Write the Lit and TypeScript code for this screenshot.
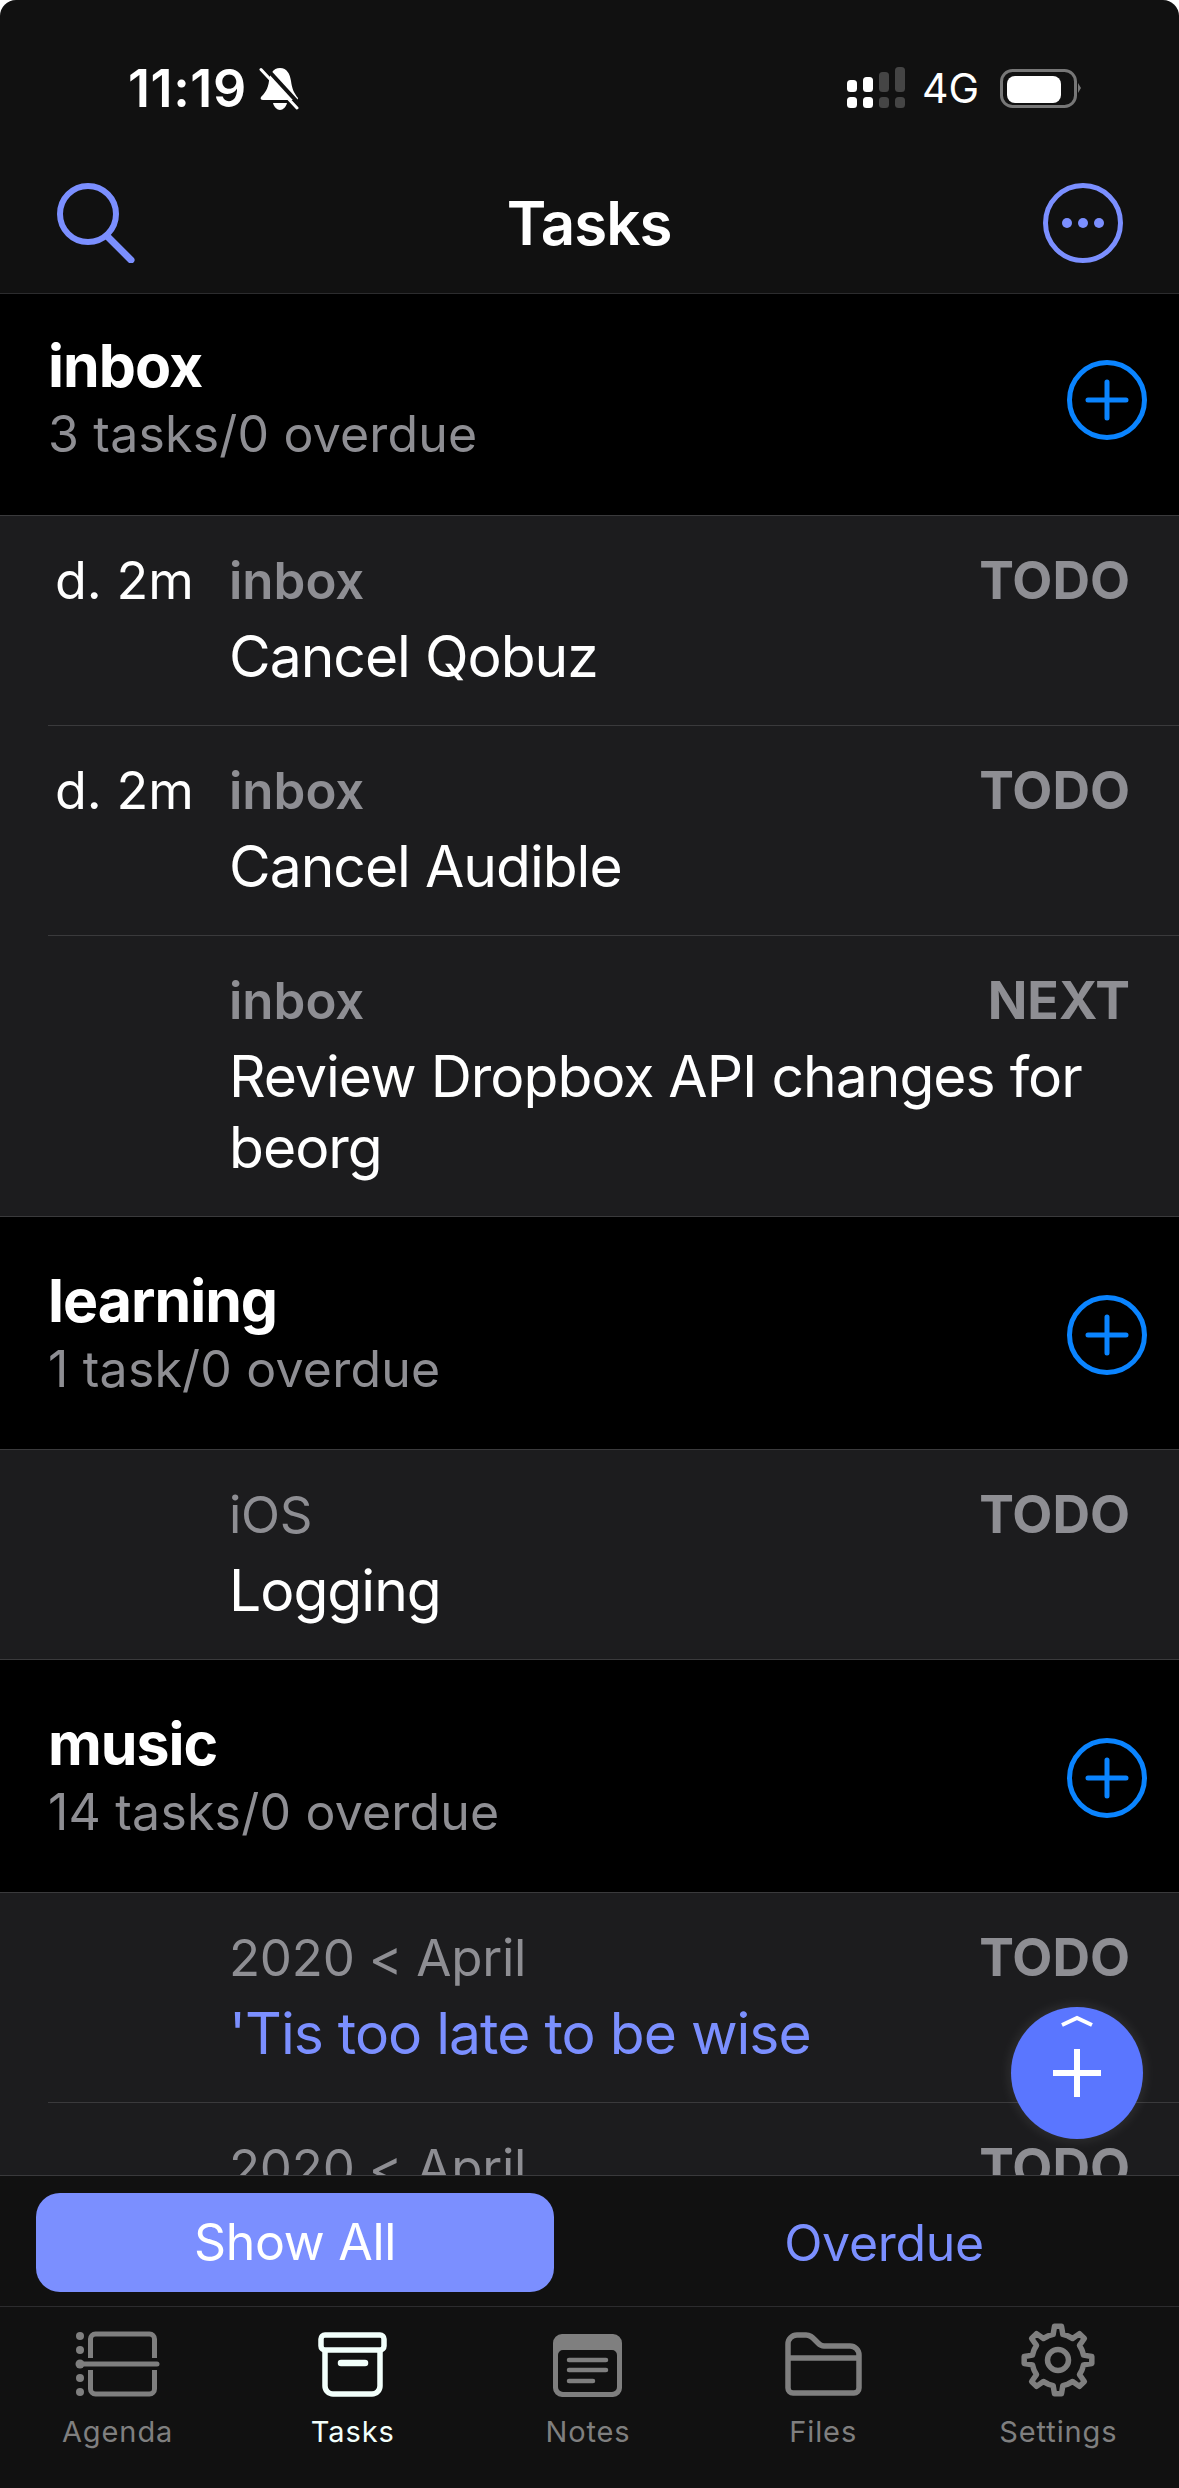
import { LitElement, html, css, svg } from 'lit';
import { customElement } from 'lit/decorators.js';

interface Task {
  due?: string;
  category: string;
  boldCategory?: boolean;
  state: string;
  title?: string;
  link?: boolean;
}

interface Section {
  name: string;
  summary: string;
  tasks: Task[];
}

const SECTIONS: Section[] = [
  {
    name: 'inbox',
    summary: '3 tasks/0 overdue',
    tasks: [
      { due: 'd. 2m', category: 'inbox', boldCategory: true, state: 'TODO', title: 'Cancel Qobuz' },
      { due: 'd. 2m', category: 'inbox', boldCategory: true, state: 'TODO', title: 'Cancel Audible' },
      { category: 'inbox', boldCategory: true, state: 'NEXT', title: 'Review Dropbox API changes for beorg' },
    ],
  },
  {
    name: 'learning',
    summary: '1 task/0 overdue',
    tasks: [{ category: 'iOS', state: 'TODO', title: 'Logging' }],
  },
  {
    name: 'music',
    summary: '14 tasks/0 overdue',
    tasks: [
      { category: '2020 < April', state: 'TODO', title: "'Tis too late to be wise", link: true },
      // scrolled under the filter bar, only the top of this row shows
      { category: '2020 < April', state: 'TODO' },
    ],
  },
];

// 8 toothed gear outline, stroked with round joins
function gearPath(cx: number, cy: number, outer: number, inner: number): string {
  const pts: string[] = [];
  const teeth = 8;
  for (let i = 0; i < teeth; i++) {
    const a = (i * Math.PI * 2) / teeth - Math.PI / 2;
    const step = (Math.PI * 2) / teeth;
    const offsets: [number, number][] = [
      [-0.5, inner],
      [-0.24, inner],
      [-0.13, outer],
      [0.13, outer],
      [0.24, inner],
    ];
    for (const [o, r] of offsets) {
      const t = a + o * step;
      pts.push(`${(cx + r * Math.cos(t)).toFixed(2)} ${(cy + r * Math.sin(t)).toFixed(2)}`);
    }
  }
  return `M${pts.join('L')}Z`;
}

const agendaIcon = svg`
  <g fill="currentColor">
    <circle cx="5" cy="6" r="4"/><circle cx="5" cy="20" r="4"/><circle cx="5" cy="34" r="4.5"/>
    <circle cx="5" cy="48" r="4"/><circle cx="5" cy="62" r="4"/>
  </g>
  <path d="M15.5 28V9a5 5 0 0 1 5-5h54a5 5 0 0 1 5 5v19M15.5 40v19a5 5 0 0 0 5 5h54a5 5 0 0 0 5-5V40" fill="none" stroke="currentColor" stroke-width="5"/>
  <path d="M5 34h77" stroke="currentColor" stroke-width="5" stroke-linecap="round"/>`;

const tasksIcon = svg`
  <g fill="none" stroke="currentColor" stroke-width="5.5">
    <rect x="3" y="3" width="63" height="15" rx="4"/>
    <path d="M7 18v36a8 8 0 0 0 8 8h39a8 8 0 0 0 8-8V18"/>
  </g>
  <path d="M23 31h24" stroke="currentColor" stroke-width="6.5" stroke-linecap="round"/>`;

const notesIcon = svg`
  <path fill-rule="evenodd" fill="currentColor" d="M9 0h51a9 9 0 0 1 9 9v45a9 9 0 0 1-9 9H9a9 9 0 0 1-9-9V9a9 9 0 0 1 9-9ZM10 16a5 5 0 0 0-5 5v32a5 5 0 0 0 5 5h49a5 5 0 0 0 5-5V21a5 5 0 0 0-5-5Z"/>
  <path d="M16 26h37M16 36h37M16 47h24" stroke="currentColor" stroke-width="4.5" stroke-linecap="round"/>`;

const filesIcon = svg`
  <path fill="none" stroke="currentColor" stroke-width="5.5" d="M3 22V12a9 9 0 0 1 9-9h9c4 0 6 2 9 5l3 3c2 2 3 3 6 3h26a9 9 0 0 1 9 9v33a5 5 0 0 1-5 5H8a5 5 0 0 1-5-5ZM3 26h71"/>`;

const gearIcon = svg`
  <path fill="none" stroke="currentColor" stroke-width="5.5" stroke-linejoin="round" d="${gearPath(37, 37, 34, 26)}"/>
  <circle cx="37" cy="37" r="10.5" fill="none" stroke="currentColor" stroke-width="5.5"/>`;

const TABS = [
  { label: 'Agenda', w: 85, h: 67, icon: agendaIcon },
  { label: 'Tasks', w: 69, h: 65, icon: tasksIcon, active: true },
  { label: 'Notes', w: 69, h: 63, icon: notesIcon },
  { label: 'Files', w: 77, h: 65, icon: filesIcon },
  { label: 'Settings', w: 74, h: 74, icon: gearIcon },
];

@customElement('app-root')
export class AppRoot extends LitElement {
  static styles = css`
    :host {
      display: block;
      background: #fff;
    }

    .phone {
      width: 1179px;
      height: 2488px;
      display: flex;
      flex-direction: column;
      position: relative;
      overflow: hidden;
      background: #111111;
      border-radius: 16px 16px 0 0;
      font-family: Inter, 'Liberation Sans', sans-serif;
      color: #fff;
    }

    .topbar {
      height: 293px;
      flex: none;
      display: flex;
      flex-direction: column;
    }

    .status {
      height: 156px;
      padding: 67px 98px 0 128px;
      box-sizing: border-box;
      display: flex;
      justify-content: space-between;
      align-items: flex-start;
    }

    .status-left,
    .status-right {
      display: flex;
      align-items: center;
    }

    .time {
      font-size: 52px;
      font-weight: 600;
      line-height: 43px;
      letter-spacing: 0.6px;
      margin-right: 12px;
    }

    .network {
      font-size: 41px;
      line-height: 42px;
      margin: 0 21px 0 17px;
    }

    .nav {
      flex: 1;
      display: flex;
      justify-content: space-between;
      align-items: center;
      padding: 0 56px 3px 57px;
    }

    .nav-title {
      font-size: 60px;
      font-weight: 600;
      letter-spacing: -1px;
    }

    main {
      flex: 1;
      min-height: 0;
      overflow: hidden;
      background: #1c1c1e;
      border-top: 1px solid #2c2c2e;
    }

    .section-head {
      height: 234px;
      box-sizing: border-box;
      background: #000;
      padding: 4px 32px 0 48px;
      display: flex;
      justify-content: space-between;
      align-items: center;
      border-bottom: 1px solid #3a3a3c;
      border-top: 1px solid #3a3a3c;
    }

    .section-head.first {
      height: 222px;
      padding: 0 32px 10px 48px;
      border-top: 0;
    }

    .section-name {
      font-size: 59px;
      line-height: 66px;
      font-weight: 700;
      letter-spacing: -1px;
    }

    .section-summary {
      font-size: 50px;
      line-height: 66px;
      letter-spacing: 0.2px;
      color: #8e8e93;
      margin-top: 2px;
    }

    .row {
      margin-left: 48px;
      padding: 34px 49px 33px 0;
      display: grid;
      grid-template-columns: 181px 1fr auto;
      border-top: 1px solid #3a3a3c;
      row-gap: 9px;
    }

    .row:first-child {
      border-top: 0;
    }

    .due {
      font-size: 52px;
      line-height: 62px;
      padding-left: 7px;
    }

    .category {
      font-size: 51px;
      line-height: 62px;
      letter-spacing: -0.25px;
      color: #8e8e93;
    }

    .category.bold {
      font-weight: 600;
      letter-spacing: 0;
    }

    .state {
      font-size: 52px;
      line-height: 62px;
      font-weight: 700;
      color: #8e8e93;
    }

    .title {
      grid-column: 2 / 4;
      font-size: 57px;
      line-height: 71px;
      letter-spacing: -1px;
    }

    .title.link {
      color: #7b8fff;
    }

    .fab {
      position: absolute;
      left: 1011px;
      top: 2007px;
      width: 132px;
      height: 132px;
      border-radius: 50%;
      background: #5a76ff;
      box-shadow: 0 0 14px rgba(255, 255, 255, 0.12);
    }

    .filters {
      flex: none;
      height: 131px;
      box-sizing: border-box;
      border-top: 1px solid #3a3a3c;
      padding: 17px 36px 14px;
      display: grid;
      grid-template-columns: 518px 1fr;
      align-items: center;
      text-align: center;
      font-size: 50px;
      letter-spacing: -0.3px;
      color: #7b8fff;
    }

    .filter-on {
      height: 99px;
      line-height: 99px;
      border-radius: 24px;
      background: #7b8fff;
      color: #fff;
    }

    .filter-off {
      padding-left: 71px;
    }

    .tabs {
      flex: none;
      height: 182px;
      box-sizing: border-box;
      border-top: 1px solid #2c2c2e;
      display: grid;
      grid-template-columns: repeat(5, 1fr);
      padding-right: 3px;
    }

    .tab {
      display: flex;
      flex-direction: column;
      align-items: center;
      color: #7f7f7f;
    }

    .tab.active {
      color: #f2fffb;
    }

    .tab-icon {
      height: 90px;
      display: flex;
      align-items: flex-end;
    }

    .tab-label {
      font-size: 29px;
      line-height: 34px;
      letter-spacing: 0.9px;
      margin-top: 18px;
    }

    svg {
      display: block;
    }
  `;

  private renderSection(section: Section, index: number) {
    return html`
      <div class="section-head ${index === 0 ? 'first' : ''}">
        <div>
          <div class="section-name">${section.name}</div>
          <div class="section-summary">${section.summary}</div>
        </div>
        <svg width="80" height="80" viewBox="0 0 80 80" fill="none" stroke="#0a84ff" stroke-width="5">
          <circle cx="40" cy="40" r="37.5"/>
          <path d="M40 22v36M21 40h38" stroke-linecap="round"/>
        </svg>
      </div>
      <div>
        ${section.tasks.map(
          (t) => html`
            <div class="row">
              <div class="due">${t.due ?? ''}</div>
              <div class="category ${t.boldCategory ? 'bold' : ''}">${t.category}</div>
              <div class="state">${t.state}</div>
              ${t.title ? html`<div class="title ${t.link ? 'link' : ''}">${t.title}</div>` : ''}
            </div>
          `
        )}
      </div>
    `;
  }

  render() {
    return html`
      <div class="phone">
        <div class="topbar">
          <div class="status">
            <div class="status-left">
              <span class="time">11:19</span>
              <svg width="40" height="43" viewBox="0 0 40 43" fill="#fff">
                <path d="M21 1C28 1 31 7 32 14C33 22 35 26 39 31C39 33 38 33 37 33H4C2 33 1 32 2 30C6 26 9 22 10 14C11 7 14 1 21 1Z"/>
                <path d="M14 36H28C27 40 24 43 21 43C18 43 15 40 14 36Z"/>
                <path d="M7 1L41 38" stroke="#111" stroke-width="4"/>
                <path d="M2 2.5L38 41" stroke="#fff" stroke-width="3" stroke-linecap="round"/>
              </svg>
            </div>
            <div class="status-right">
              <svg width="58" height="42" viewBox="0 0 58 42">
                <g fill="#fff">
                  <rect x="0" y="13" width="10" height="12" rx="3.5"/>
                  <rect x="16" y="10" width="10" height="15" rx="3.5"/>
                  <rect x="0" y="30" width="10" height="11" rx="3.5"/>
                  <rect x="16" y="30" width="10" height="11" rx="3.5"/>
                </g>
                <g fill="#454545">
                  <rect x="32" y="5" width="10" height="20" rx="3.5"/>
                  <rect x="48" y="0" width="10" height="25" rx="3.5"/>
                  <rect x="32" y="30" width="10" height="11" rx="3.5"/>
                  <rect x="48" y="30" width="10" height="11" rx="3.5"/>
                </g>
              </svg>
              <span class="network">4G</span>
              <svg width="81" height="39" viewBox="0 0 81 39">
                <rect x="1.5" y="1.5" width="74" height="36" rx="11" fill="none" stroke="#777" stroke-width="3"/>
                <rect x="7" y="7" width="54" height="27" rx="8" fill="#fff"/>
                <path d="M78 14l3 5l-3 5Z" fill="#777"/>
              </svg>
            </div>
          </div>
          <div class="nav">
            <svg width="78" height="80" viewBox="0 0 78 80" fill="none" stroke="#7b8fff" stroke-width="6">
              <circle cx="31" cy="31" r="28"/>
              <path d="M50 53L74 77" stroke-width="7" stroke-linecap="round"/>
            </svg>
            <span class="nav-title">Tasks</span>
            <svg width="80" height="80" viewBox="0 0 80 80" fill="none" stroke="#7b8fff" stroke-width="5">
              <circle cx="40" cy="40" r="37.5"/>
              <g fill="#7b8fff" stroke="none">
                <circle cx="24" cy="40" r="5"/><circle cx="40" cy="40" r="5"/><circle cx="56" cy="40" r="5"/>
              </g>
            </svg>
          </div>
        </div>

        <main>${SECTIONS.map((s, i) => this.renderSection(s, i))}</main>

        <div class="fab">
          <svg width="132" height="132" viewBox="0 0 132 132" fill="none" stroke="#fff">
            <path d="M51 18L66 11L81 18" stroke-width="4"/>
            <path d="M66 42V90M42 66H90" stroke-width="6"/>
          </svg>
        </div>

        <div class="filters">
          <div class="filter-on">Show All</div>
          <div class="filter-off">Overdue</div>
        </div>

        <div class="tabs">
          ${TABS.map(
            (t) => html`
              <div class="tab ${t.active ? 'active' : ''}">
                <div class="tab-icon">
                  <svg width="${t.w}" height="${t.h}" viewBox="0 0 ${t.w} ${t.h}">${t.icon}</svg>
                </div>
                <div class="tab-label">${t.label}</div>
              </div>
            `
          )}
        </div>
      </div>
    `;
  }
}

declare global {
  interface HTMLElementTagNameMap {
    'app-root': AppRoot;
  }
}
